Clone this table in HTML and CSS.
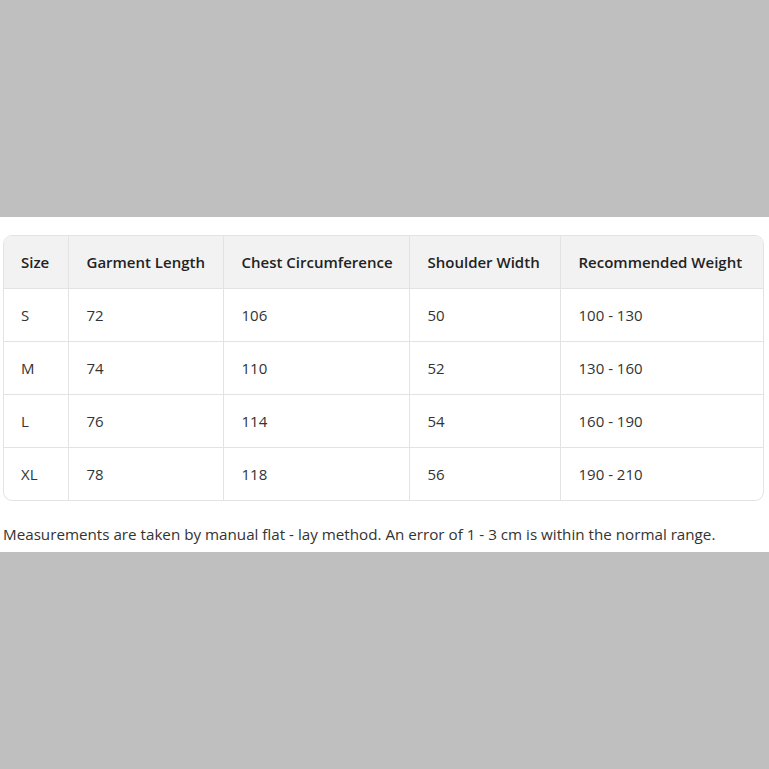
FILE: index.html
```html
<!DOCTYPE html>
<html lang="en">
<head>
<meta charset="utf-8">
<title>Size Chart</title>
<link rel="stylesheet" href="styles.css">
</head>
<body>
<div class="page">
  <section class="panel">
    <div class="table-wrap">
      <table class="size-table">
        <colgroup>
          <col class="c-size">
          <col class="c-length">
          <col class="c-chest">
          <col class="c-shoulder">
          <col class="c-weight">
        </colgroup>
        <thead>
          <tr>
            <th>Size</th>
            <th>Garment Length</th>
            <th>Chest Circumference</th>
            <th>Shoulder Width</th>
            <th>Recommended Weight</th>
          </tr>
        </thead>
        <tbody>
          <tr><td>S</td><td>72</td><td>106</td><td>50</td><td>100 - 130</td></tr>
          <tr><td>M</td><td>74</td><td>110</td><td>52</td><td>130 - 160</td></tr>
          <tr><td>L</td><td>76</td><td>114</td><td>54</td><td>160 - 190</td></tr>
          <tr><td>XL</td><td>78</td><td>118</td><td>56</td><td>190 - 210</td></tr>
        </tbody>
      </table>
    </div>
    <p class="note">Measurements are taken by manual flat - lay method. An error of 1 - 3 cm is within the normal range.</p>
  </section>
</div>
</body>
</html>
```

FILE: styles.css
```css
html, body {
  margin: 0;
  padding: 0;
  background: #bfbfbf;
}
.page {
  height: 769px;
  display: flex;
  flex-direction: column;
  justify-content: center;
}
.panel {
  background: #ffffff;
  height: 335px;
  box-sizing: border-box;
  padding: 18px 5px 0 3px;
  font-family: "Open Sans", "Noto Sans", sans-serif;
  color: #333333;
}
.table-wrap {
  border: 1px solid #e3e3e3;
  border-radius: 9px;
  overflow: hidden;
}
.size-table {
  width: 100%;
  border-collapse: collapse;
  table-layout: fixed;
  font-size: 15px;
}
.c-size { width: 64px; }
.c-length { width: 155px; }
.c-chest { width: 186px; }
.c-shoulder { width: 151px; }
.c-weight { width: auto; }
.size-table th,
.size-table td {
  text-align: left;
  padding: 0 18px;
  border-left: 1px solid #e3e3e3;
  border-top: 1px solid #e3e3e3;
  white-space: nowrap;
}
.size-table th:first-child,
.size-table td:first-child {
  border-left: none;
  padding-left: 17px;
}
.size-table thead th {
  border-top: none;
  background: #f2f2f2;
  font-weight: 600;
  height: 52px;
  color: #222222;
}
.size-table td {
  height: 52px;
}
.note {
  margin: 22px 0 0 0;
  font-size: 15.2px;
  line-height: 22px;
}
```
